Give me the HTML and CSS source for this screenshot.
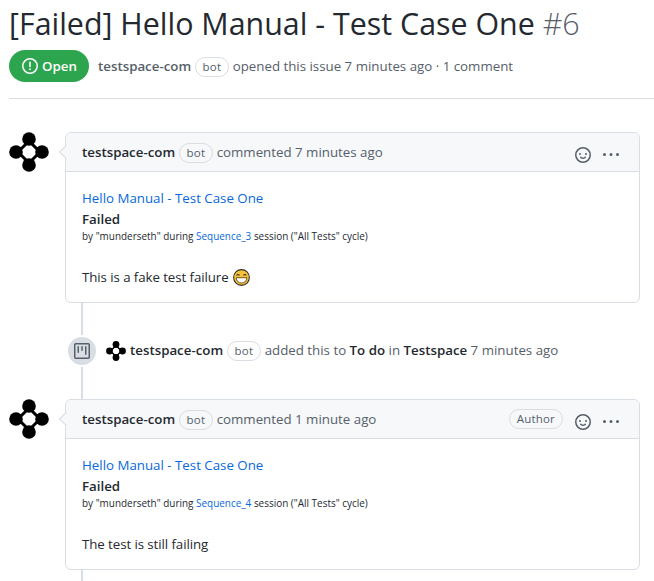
FILE: index.html
```html
<!DOCTYPE html>
<html lang="en">
<head>
<meta charset="utf-8">
<title>[Failed] Hello Manual - Test Case One #6</title>
<link rel="stylesheet" href="styles.css">
</head>
<body>
<svg class="defs" width="0" height="0" aria-hidden="true">
  <defs>
    <symbol id="logo" viewBox="0 0 40 40">
      <path d="M20 9 31 20 20 31 9 20Z" fill="none" stroke="#000" stroke-width="3"/>
      <circle cx="20" cy="7" r="6.8"/><circle cx="20" cy="33" r="6.8"/>
      <circle cx="7" cy="20" r="6.8"/><circle cx="33" cy="20" r="6.8"/>
    </symbol>
    <symbol id="smiley" viewBox="0 0 16 16">
      <path fill="currentColor" d="M8 0a8 8 0 1 1 0 16A8 8 0 0 1 8 0ZM1.5 8a6.5 6.5 0 1 0 13 0 6.5 6.5 0 0 0-13 0Zm3.82 1.636a.75.75 0 0 1 1.038.175l.007.009c.103.118.22.222.35.31.264.178.683.37 1.285.37.602 0 1.02-.192 1.285-.371.13-.088.247-.192.35-.31l.007-.008a.75.75 0 0 1 1.222.87l-.022-.015c.02.013.021.015.021.015v.001l-.001.002-.002.003-.005.007-.014.019a2.066 2.066 0 0 1-.184.213c-.16.166-.338.316-.53.445-.63.418-1.37.638-2.127.629-.946 0-1.652-.308-2.126-.63a3.331 3.331 0 0 1-.715-.657l-.014-.02-.005-.006-.002-.003v-.002h-.001l.613-.432-.614.43a.75.75 0 0 1 .183-1.044ZM12 7a1 1 0 1 1-2 0 1 1 0 0 1 2 0ZM5 8a1 1 0 1 1 0-2 1 1 0 0 1 0 2Zm5.25 2.25.592.416a97.71 97.71 0 0 0-.592-.416Z"/>
    </symbol>
    <symbol id="kebab" viewBox="0 0 16 16">
      <path fill="currentColor" d="M8 9a1.5 1.5 0 1 0 0-3 1.5 1.5 0 0 0 0 3ZM1.5 9a1.5 1.5 0 1 0 0-3 1.5 1.5 0 0 0 0 3Zm13 0a1.5 1.5 0 1 0 0-3 1.5 1.5 0 0 0 0 3Z"/>
    </symbol>
  </defs>
</svg>

<header class="issue-head">
  <h1 class="title">[Failed] Hello Manual - Test Case One <span class="num">#6</span></h1>
  <div class="meta">
    <span class="state">
      <svg class="state-icon" viewBox="0 0 16 16"><path fill="currentColor" d="M8 0a8 8 0 1 1 0 16A8 8 0 0 1 8 0ZM1.5 8a6.5 6.5 0 1 0 13 0 6.5 6.5 0 0 0-13 0Z"/><rect x="7.2" y="3.6" width="1.6" height="5.6" rx=".8" fill="currentColor"/><circle cx="8" cy="11.3" r="1" fill="currentColor"/></svg>
      Open
    </span>
    <span class="meta-text"><b class="meta-author">testspace-com</b> <span class="label">bot</span> opened this issue 7 minutes ago · 1 comment</span>
  </div>
</header>

<main class="thread">
  <article class="comment-row">
    <svg class="avatar"><use href="#logo"/></svg>
    <div class="comment">
      <div class="comment-head">
        <span class="head-text"><b class="author">testspace-com</b> <span class="label">bot</span> commented 7 minutes ago</span>
        <span class="actions">
          <svg class="act-smile"><use href="#smiley"/></svg>
          <svg class="act-kebab"><use href="#kebab"/></svg>
        </span>
      </div>
      <div class="comment-body">
        <p class="case"><a href="#">Hello Manual - Test Case One</a></p>
        <p class="status">Failed</p>
        <p class="by">by "munderseth" during <a href="#">Sequence_3</a> session ("All Tests" cycle)</p>
        <p class="message">This is a fake test failure
          <svg class="emoji" viewBox="0 0 16 16" role="img" aria-label="smile">
            <circle cx="8" cy="8" r="7.4" fill="#f7c33c" stroke="#33302a" stroke-width="1"/>
            <path d="M3 8.2h10c0 3-2.2 5-5 5s-5-2-5-5Z" fill="#fff" stroke="#5a3d10" stroke-width=".8"/>
            <path d="M3.5 6.2c.5-1.3 2-1.3 2.6 0M9.9 6.2c.6-1.3 2.1-1.3 2.6 0" fill="none" stroke="#33302a" stroke-width="1"/>
          </svg>
        </p>
      </div>
    </div>
  </article>

  <div class="event">
    <span class="badge">
      <svg class="badge-icon" viewBox="0 0 16 16"><path fill="currentColor" d="M1.75 0h12.5C15.216 0 16 .784 16 1.75v12.5A1.75 1.75 0 0 1 14.25 16H1.75A1.75 1.75 0 0 1 0 14.25V1.75C0 .784.784 0 1.75 0ZM1.5 1.75v12.5c0 .138.112.25.25.25h12.5a.25.25 0 0 0 .25-.25V1.75a.25.25 0 0 0-.25-.25H1.75a.25.25 0 0 0-.25.25ZM11.75 3a.75.75 0 0 1 .75.75v7.5a.75.75 0 0 1-1.5 0v-7.5a.75.75 0 0 1 .75-.75Zm-8.25.75a.75.75 0 0 1 1.5 0v5.5a.75.75 0 0 1-1.5 0v-5.5ZM8 3a.75.75 0 0 1 .75.75v3.5a.75.75 0 0 1-1.5 0v-3.5A.75.75 0 0 1 8 3Z"/></svg>
    </span>
    <svg class="event-avatar"><use href="#logo"/></svg>
    <span class="event-text"><b class="author">testspace-com</b> <span class="label">bot</span> added this to <b class="author">To do</b> in <b class="author">Testspace</b> 7 minutes ago</span>
  </div>

  <article class="comment-row">
    <svg class="avatar"><use href="#logo"/></svg>
    <div class="comment">
      <div class="comment-head">
        <span class="head-text"><b class="author">testspace-com</b> <span class="label">bot</span> commented 1 minute ago</span>
        <span class="actions">
          <span class="label label-author">Author</span>
          <svg class="act-smile"><use href="#smiley"/></svg>
          <svg class="act-kebab"><use href="#kebab"/></svg>
        </span>
      </div>
      <div class="comment-body">
        <p class="case"><a href="#">Hello Manual - Test Case One</a></p>
        <p class="status">Failed</p>
        <p class="by">by "munderseth" during <a href="#">Sequence_4</a> session ("All Tests" cycle)</p>
        <p class="message">The test is still failing</p>
      </div>
    </div>
  </article>
  <div class="tail"></div>
</main>
</body>
</html>
```
FILE: styles.css
```css
* { box-sizing: border-box; }

html, body {
  margin: 0;
  padding: 0;
  background: #fff;
  overflow: hidden;
}

body {
  width: 654px;
  height: 581px;
  font-family: "Open Sans", "Noto Sans", "Liberation Sans", sans-serif;
  font-size: 13.3px;
  color: #24292f;
}

.defs { position: absolute; }

.issue-head {
  margin-left: 9px;
  height: 99px;
  border-bottom: 1px solid #d8dee4;
}

.title {
  margin: 0;
  height: 50px;
  font-size: 30.4px;
  font-weight: 400;
  line-height: 47px;
  white-space: nowrap;
}

.num { color: #57606a; font-weight: 300; }

.meta {
  display: flex;
  align-items: center;
  gap: 9px;
  height: 32px;
}

.state {
  display: inline-flex;
  align-items: center;
  gap: 4px;
  width: 80px;
  height: 32px;
  padding-left: 13px;
  border-radius: 16px;
  background: #2da44e;
  color: #fff;
  font-weight: 600;
}

.state-icon { width: 16px; height: 16px; }

.meta-text { color: #57606a; white-space: nowrap; padding-top: 2px; }
.meta-author { font-weight: 600; }

.label {
  display: inline-block;
  padding: 0 7px;
  height: 20px;
  border: 1px solid #d8dee4;
  border-radius: 10px;
  font-size: 11.5px;
  font-weight: 500;
  letter-spacing: .2px;
  line-height: 18px;
  color: #57606a;
  vertical-align: 0;
}

.thread { padding: 33px 14px 0 9px; }

.comment-row { display: flex; gap: 16px; }

.avatar { flex: none; width: 40px; height: 40px; }

.comment {
  position: relative;
  flex: 1;
  border: 1px solid #d8dee4;
  border-radius: 6px;
}

.comment::before {
  content: "";
  position: absolute;
  left: -5px;
  top: 14px;
  width: 9px;
  height: 9px;
  background: #f6f8fa;
  border-left: 1px solid #d8dee4;
  border-bottom: 1px solid #d8dee4;
  transform: rotate(45deg);
}

.comment-head {
  display: flex;
  align-items: center;
  justify-content: space-between;
  height: 39px;
  padding: 0 19px 0 16px;
  background: #f6f8fa;
  border-bottom: 1px solid #d8dee4;
  border-radius: 6px 6px 0 0;
  color: #57606a;
}

.head-text, .event-text { white-space: nowrap; }

.head-text { padding-top: 2px; }

.author { color: #24292f; font-weight: 600; }

.actions {
  display: flex;
  align-items: center;
  gap: 11px;
  margin-top: 6px;
}

.act-smile { width: 16px; height: 16px; color: #57606a; }
.act-kebab { width: 18px; height: 16px; color: #57606a; }

.label-author { margin: -6px 1px 0 0; }

.comment-body { padding: 16px 16px 0; height: 130px; }

.comment-body p { margin: 0; white-space: nowrap; }

.case { line-height: 21px; }
.case a, .by a { color: #0969da; text-decoration: none; }

.status { margin-top: 0; font-weight: 600; line-height: 21px; }

.by { font-size: 9.95px; line-height: 12px; }

.comment-body .message { margin-top: 25px; line-height: 21px; letter-spacing: -.08px; }

.emoji { width: 17px; height: 17px; vertical-align: -4px; margin-left: 1px; }

.event {
  display: flex;
  align-items: center;
  position: relative;
  height: 96px;
  margin-left: 56px;
  padding-left: 3px;
  color: #57606a;
  background: linear-gradient(#d8dee4, #d8dee4) 16px 0 / 2px 100% no-repeat;
}

.badge {
  display: flex;
  align-items: center;
  justify-content: center;
  width: 28px;
  height: 28px;
  border-radius: 50%;
  background: #d8dee4;
  color: #57606a;
  box-shadow: 0 0 0 2px #fff;
}

.badge-icon { width: 16px; height: 16px; }

.event-avatar { width: 20px; height: 20px; margin: 0 4px 0 10px; flex: none; }

.tail {
  height: 20px;
  margin-left: 56px;
  background: linear-gradient(#d8dee4, #d8dee4) 16px 0 / 2px 100% no-repeat;
}
```
